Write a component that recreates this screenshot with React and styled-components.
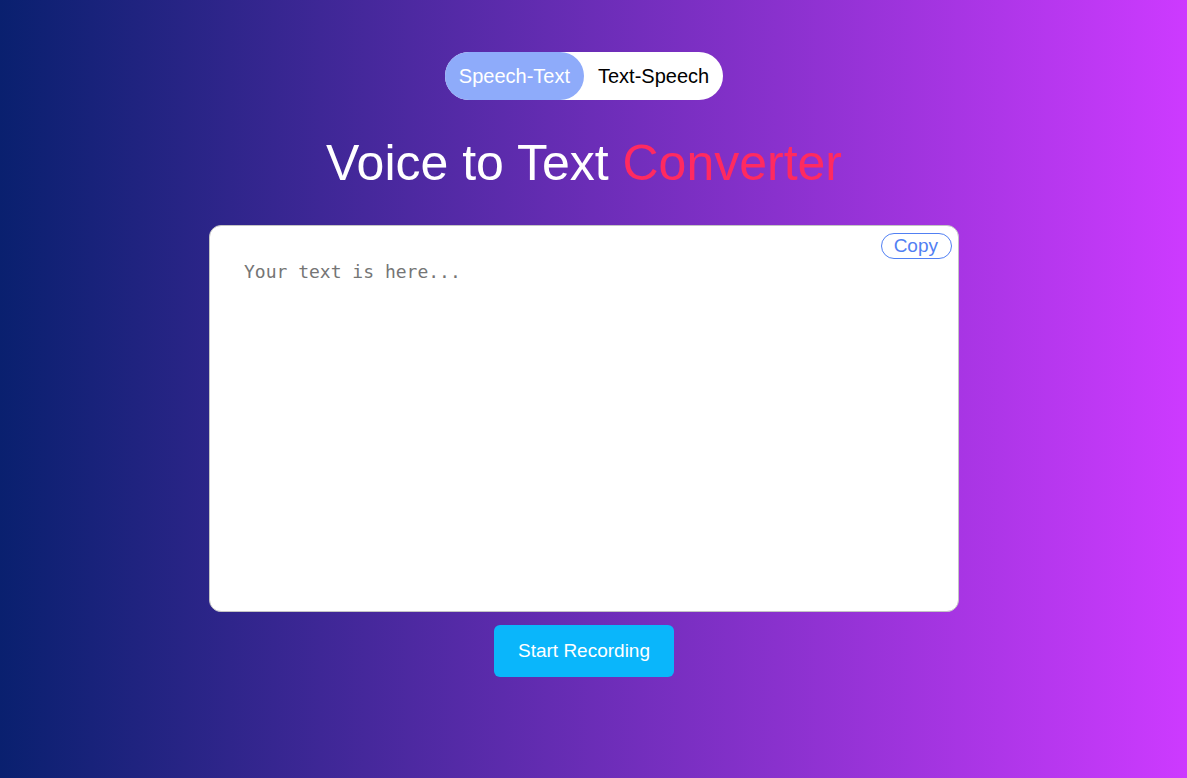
import React, { useState } from "react";
import styled, { createGlobalStyle } from "styled-components";

const GlobalStyle = createGlobalStyle`
  * { box-sizing: border-box; }
  body {
    margin: 0;
    font-family: "Liberation Sans", Arial, sans-serif;
  }
`;

const Page = styled.main`
  min-height: 100vh;
  display: flex;
  flex-direction: column;
  align-items: center;
  padding: 52px 19px 52px 0;
  background: linear-gradient(90deg, #09206f, #cd3aff);
`;

const Tabs = styled.nav`
  display: flex;
  border-radius: 24px;
  background: #fff;
`;

const Tab = styled.button`
  height: 48px;
  padding: 0 14px;
  border: 0;
  border-radius: 24px;
  font: inherit;
  font-size: 20px;
  cursor: pointer;
  color: ${({ $active }) => ($active ? "#fff" : "#000")};
  background: ${({ $active }) => ($active ? "#8eabfa" : "transparent")};
`;

const Title = styled.h1`
  margin: 35px 0 33px;
  font-size: 50px;
  line-height: 57px;
  font-weight: 400;
  color: #fff;
`;

const Accent = styled.span`
  color: #ff2a60;
`;

const Editor = styled.section`
  position: relative;
  width: 100%;
  max-width: 750px;
`;

const TextBox = styled.textarea`
  display: block;
  width: 100%;
  height: 387px;
  padding: 34px;
  border: 1px solid #c4c4c4;
  border-radius: 12px;
  outline: none;
  resize: none;
  background: #fff;
  color: #222;
  font-family: "DejaVu Sans Mono", monospace;
  font-size: 18px;
  line-height: 24px;

  &::placeholder {
    color: #757575;
  }
`;

const CopyButton = styled.button`
  position: absolute;
  top: 8px;
  right: 7px;
  height: 26px;
  padding: 0 13px 0 12px;
  border: 1px solid #5180f3;
  border-radius: 13px;
  background: #fff;
  color: #5180f3;
  font: inherit;
  font-size: 19px;
  line-height: 24px;
  cursor: pointer;
`;

const RecordButton = styled.button`
  height: 52px;
  margin-top: 13px;
  padding: 0 24px;
  border: 0;
  border-radius: 6px;
  background: #0ab6fb;
  color: #fff;
  font: inherit;
  font-size: 19px;
  cursor: pointer;
`;

export default function App() {
  const [mode, setMode] = useState("speech");
  const [text, setText] = useState("");

  return (
    <>
      <GlobalStyle />
      <Page>
        <Tabs aria-label="Converter mode">
          <Tab type="button" $active={mode === "speech"} onClick={() => setMode("speech")}>
            Speech-Text
          </Tab>
          <Tab type="button" $active={mode === "text"} onClick={() => setMode("text")}>
            Text-Speech
          </Tab>
        </Tabs>
        <Title>
          Voice to Text <Accent>Converter</Accent>
        </Title>
        <Editor>
          <TextBox
            aria-label="Converted text"
            placeholder="Your text is here..."
            value={text}
            onChange={(e) => setText(e.target.value)}
          />
          <CopyButton type="button" onClick={() => navigator.clipboard?.writeText(text)}>
            Copy
          </CopyButton>
        </Editor>
        <RecordButton type="button">Start Recording</RecordButton>
      </Page>
    </>
  );
}
